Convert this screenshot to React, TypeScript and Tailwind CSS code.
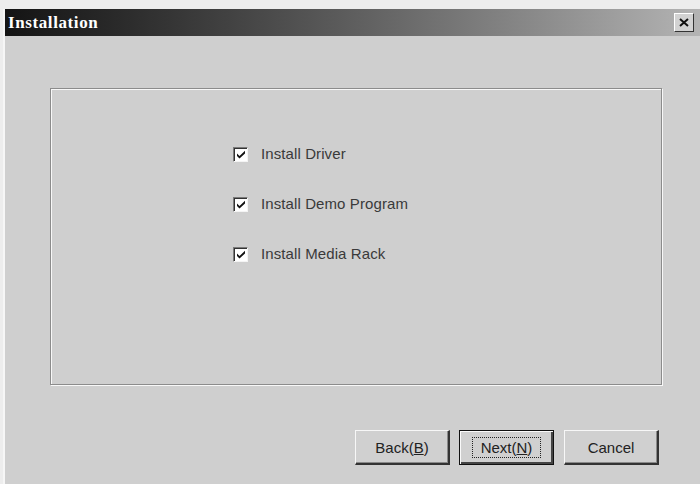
import React, { useState } from 'react'

const items = ['Install Driver', 'Install Demo Program', 'Install Media Rack']

const CheckBox = ({ checked }: { checked: boolean }) => (
  <span className="flex h-[15px] w-[15px] items-center justify-center bg-white border-t-[#7a7a7a] border-l-[#7a7a7a] border-b-[#f4f4f4] border-r-[#f4f4f4] border shadow-[inset_1px_1px_0_#333]">
    {checked && (
      <svg width="10" height="9" viewBox="0 0 10 9">
        <path d="M1 3.5 L3.5 6 L9 0.8 L9 3.5 L3.5 8.5 L1 6 Z" fill="#111" />
      </svg>
    )}
  </span>
)

const Btn = ({ children, def }: { children: React.ReactNode; def?: boolean }) => (
  <button
    type="button"
    className={
      'flex h-[35px] w-[95px] items-center justify-center bg-[#d0d0d0] text-[15px] text-[#222] ' +
      (def
        ? 'border border-[#111] shadow-[inset_1px_1px_0_#fafafa,inset_-2px_-2px_0_#444]'
        : 'border-t border-l border-t-[#f7f7f7] border-l-[#f7f7f7] border-b-2 border-r-2 border-b-[#333] border-r-[#333] shadow-[inset_-1px_-1px_0_#8a8a8a]')
    }
  >
    {def ? (
      <span className="border border-dotted border-[#222] px-[8px] leading-[19px]">{children}</span>
    ) : (
      <span className="leading-[19px]">{children}</span>
    )}
  </button>
)

export default function App() {
  const [checked, setChecked] = useState([true, true, true])

  return (
    <div
      className="h-[484px] w-[700px] overflow-hidden bg-[#ededed] pt-[9px] pl-[3px]"
      style={{ fontFamily: '"Liberation Sans", Arial, sans-serif' }}
    >
      <div className="flex h-[475px] flex-col border-l-2 border-l-[#f6f6f6] bg-[#cfcfcf]">
        <div className="flex h-[27px] items-center justify-between bg-gradient-to-r from-[#141414] via-[#5e5e5e] to-[#b4b4b4] pl-[3px] pr-[6px]">
          <span
            className="text-[17px] font-bold text-white tracking-[0.6px]"
            style={{ fontFamily: '"Liberation Serif", "Times New Roman", serif' }}
          >
            Installation
          </span>
          <span className="flex h-[19px] w-[20px] items-center justify-center bg-[#d2d2d2] border-t border-l border-t-white border-l-white border-b border-r border-b-[#333] border-r-[#333]">
            <svg width="10" height="9" viewBox="0 0 10 9">
              <path d="M1 1 L9 8 M9 1 L1 8" stroke="#111" strokeWidth="2" />
            </svg>
          </span>
        </div>

        <div className="ml-[45px] mt-[52px] flex h-[297px] w-[612px] flex-col gap-[35px] border border-[#8c8c8c] pl-[182px] pt-[58px] shadow-[inset_1px_1px_0_#f8f8f8,1px_1px_0_#f8f8f8]">
          {items.map((t, i) => (
            <label
              key={t}
              className="flex h-[15px] cursor-pointer items-center gap-[13px] text-[15px] text-[#3a3a3a]"
              onClick={() => setChecked(c => c.map((v, j) => (j === i ? !v : v)))}
            >
              <CheckBox checked={checked[i]} />
              <span className="tracking-[0.1px]">{t}</span>
            </label>
          ))}
        </div>

        <div className="ml-[350px] mt-[45px] flex gap-[9px]">
          <Btn>
            Back(<u>B</u>)
          </Btn>
          <Btn def>
            Next(<u>N</u>)
          </Btn>
          <div className="ml-[1px]">
            <Btn>Cancel</Btn>
          </div>
        </div>
      </div>
    </div>
  )
}
